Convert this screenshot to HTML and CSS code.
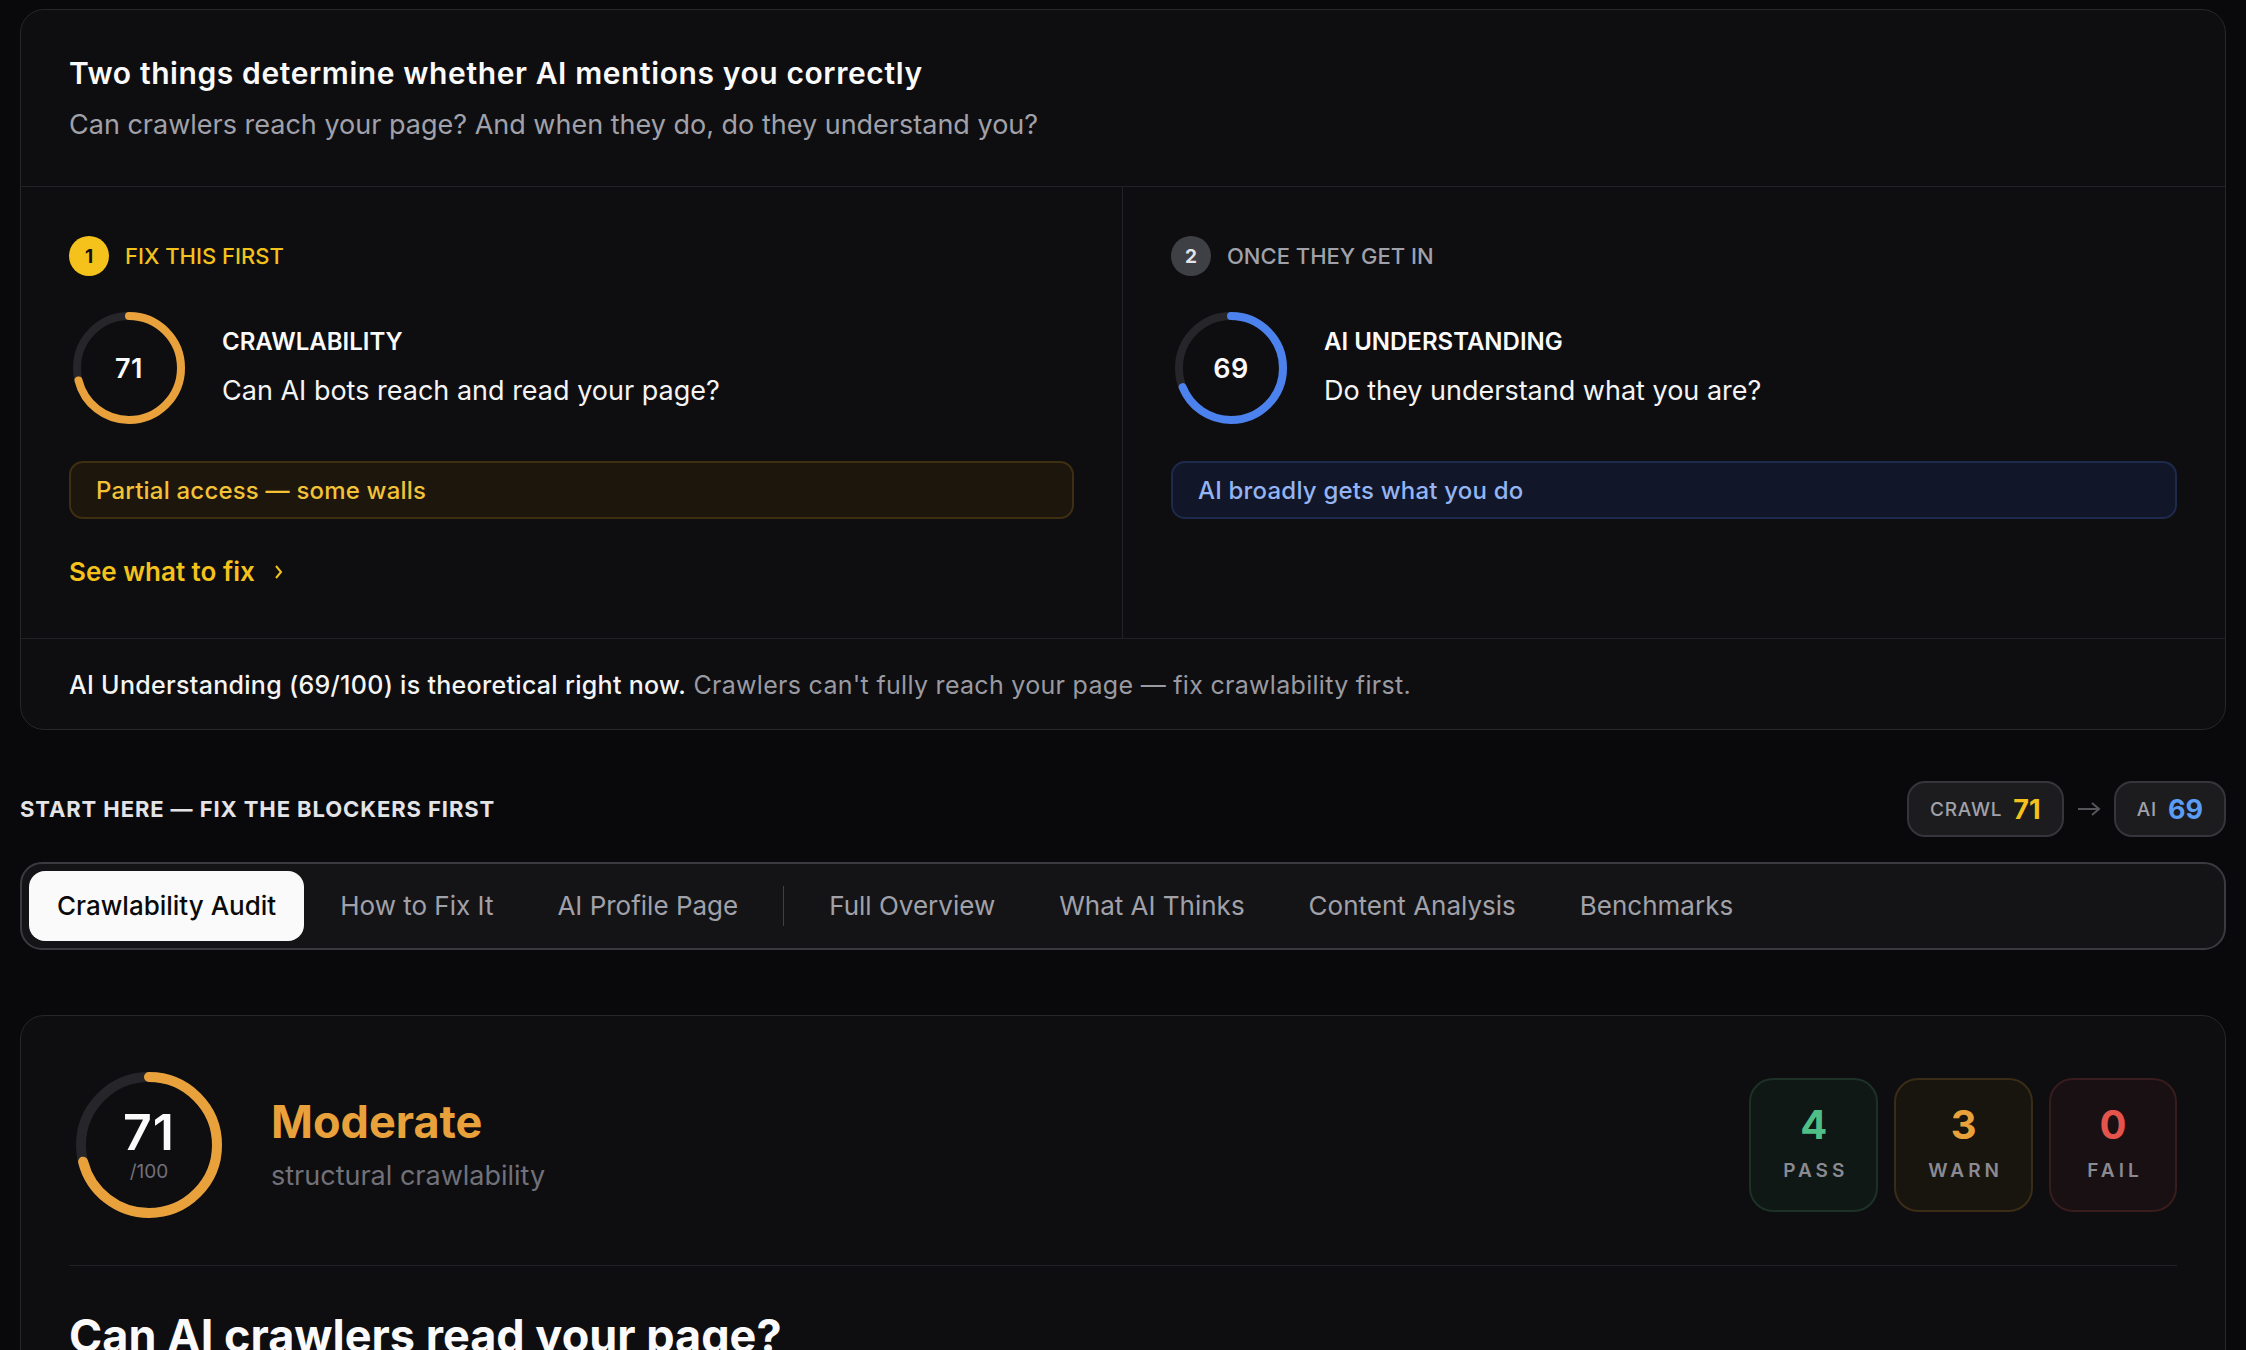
FILE: index.html
```html
<!DOCTYPE html>
<html lang="en">
<head>
    <meta charset="UTF-8">
    <meta name="viewport" content="width=device-width, initial-scale=1.0">
    <title>Crawlability Audit</title>
    <link rel="stylesheet" href="styles.css">
</head>
<body>

<main class="page">
    <section class="card overview">
        <header class="overview-head">
            <h1>Two things determine whether AI mentions you correctly</h1>
            <p>Can crawlers reach your page? And when they do, do they understand you?</p>
        </header>

        <div class="overview-grid">
            <div class="pillar pillar-first">
                <div class="step step-primary">
                    <span class="step-num">1</span>
                    <span class="step-label">FIX THIS FIRST</span>
                </div>
                <div class="score-row">
                    <div class="ring">
                        <svg width="120" height="120" viewBox="0 0 120 120">
                            <circle class="ring-track" cx="60" cy="60" r="52"/>
                            <circle class="ring-fill ring-orange" cx="60" cy="60" r="52" stroke-dasharray="232 327" transform="rotate(-90 60 60)"/>
                        </svg>
                        <span class="ring-value">71</span>
                    </div>
                    <div class="score-text">
                        <h3>CRAWLABILITY</h3>
                        <p>Can AI bots reach and read your page?</p>
                    </div>
                </div>
                <div class="verdict verdict-warn">Partial access — some walls</div>
                <a href="#" class="fix-link">See what to fix
                    <svg width="12" height="20" viewBox="0 0 12 20"><polyline points="3,4 8,10 3,16"/></svg>
                </a>
            </div>

            <div class="pillar">
                <div class="step">
                    <span class="step-num">2</span>
                    <span class="step-label">ONCE THEY GET IN</span>
                </div>
                <div class="score-row">
                    <div class="ring">
                        <svg width="120" height="120" viewBox="0 0 120 120">
                            <circle class="ring-track" cx="60" cy="60" r="52"/>
                            <circle class="ring-fill ring-blue" cx="60" cy="60" r="52" stroke-dasharray="225 327" transform="rotate(-90 60 60)"/>
                        </svg>
                        <span class="ring-value">69</span>
                    </div>
                    <div class="score-text">
                        <h3>AI UNDERSTANDING</h3>
                        <p>Do they understand what you are?</p>
                    </div>
                </div>
                <div class="verdict verdict-info">AI broadly gets what you do</div>
            </div>
        </div>

        <footer class="overview-foot">
            <strong>AI Understanding (69/100) is theoretical right now.</strong>
            <span>Crawlers can't fully reach your page — fix crawlability first.</span>
        </footer>
    </section>

    <div class="section-bar">
        <h2>START HERE — FIX THE BLOCKERS FIRST</h2>
        <div class="chips">
            <span class="chip">CRAWL <b class="chip-yellow">71</b></span>
            <svg class="chip-arrow" width="26" height="16" viewBox="0 0 26 16"><line x1="2" y1="8" x2="23" y2="8"/><polyline points="16,2 23,8 16,14"/></svg>
            <span class="chip">AI <b class="chip-blue">69</b></span>
        </div>
    </div>

    <nav class="tabs">
        <a href="#" class="tab active">Crawlability Audit</a>
        <a href="#" class="tab">How to Fix It</a>
        <a href="#" class="tab">AI Profile Page</a>
        <span class="tab-sep"></span>
        <a href="#" class="tab">Full Overview</a>
        <a href="#" class="tab">What AI Thinks</a>
        <a href="#" class="tab">Content Analysis</a>
        <a href="#" class="tab">Benchmarks</a>
    </nav>

    <section class="card audit">
        <div class="audit-head">
            <div class="ring ring-big">
                <svg width="160" height="160" viewBox="0 0 160 160">
                    <circle class="ring-track" cx="80" cy="80" r="68"/>
                    <circle class="ring-fill ring-orange" cx="80" cy="80" r="68" stroke-dasharray="303 428" transform="rotate(-90 80 80)"/>
                </svg>
                <div class="ring-big-value">
                    <span class="big-num">71</span>
                    <span class="big-max">/100</span>
                </div>
            </div>
            <div class="grade">
                <div class="grade-title">Moderate</div>
                <div class="grade-sub">structural crawlability</div>
            </div>
            <div class="stats">
                <div class="stat stat-pass"><span class="stat-num">4</span><span class="stat-label">PASS</span></div>
                <div class="stat stat-warn"><span class="stat-num">3</span><span class="stat-label">WARN</span></div>
                <div class="stat stat-fail"><span class="stat-num">0</span><span class="stat-label">FAIL</span></div>
            </div>
        </div>
        <div class="audit-body">
            <h2>Can AI crawlers read your page?</h2>
        </div>
    </section>
</main>

</body>
</html>
```

FILE: styles.css
```css
body {
    font-family: Inter, "Noto Sans", sans-serif;
    background-color: #09090b;
    color: #fafafa;
    margin: 0;
    padding: 0;
}
.page {
    padding: 9px 20px 0;
}
.card {
    background-color: #0e0e10;
    border: 1px solid #27272a;
    border-radius: 24px;
}

/* overview card */
.overview-head {
    padding: 43px 48px 43px;
    border-bottom: 1px solid #222226;
}
.overview-head h1 {
    margin: 0;
    font-size: 30px;
    line-height: 40px;
    font-weight: 600;
    letter-spacing: 0.6px;
    color: #fafafa;
}
.overview-head p {
    margin: 14px 0 0;
    font-size: 27px;
    line-height: 36px;
    color: #a1a1aa;
}
.overview-grid {
    display: grid;
    grid-template-columns: 1fr 1fr;
}
.pillar {
    padding: 49px 48px 49px;
    display: flex;
    flex-direction: column;
}
.pillar-first {
    border-right: 1px solid #222226;
}
.step {
    display: flex;
    align-items: center;
    gap: 16px;
    height: 40px;
}
.step-num {
    width: 40px;
    height: 40px;
    border-radius: 50%;
    background-color: #3f3f46;
    color: #e4e4e7;
    font-size: 19px;
    font-weight: 700;
    display: flex;
    align-items: center;
    justify-content: center;
}
.step-label {
    font-size: 22px;
    font-weight: 500;
    color: #a1a1aa;
}
.step-primary .step-num {
    background-color: #f4c21b;
    color: #111111;
}
.step-primary .step-label {
    color: #f4c21b;
}
.score-row {
    display: flex;
    align-items: center;
    gap: 33px;
    margin-top: 32px;
}
.ring {
    display: grid;
    place-items: center;
}
.ring svg,
.ring > span,
.ring > div {
    grid-area: 1 / 1;
}
.ring-track {
    fill: none;
    stroke: #26262a;
    stroke-width: 8;
}
.ring-fill {
    fill: none;
    stroke-width: 8;
    stroke-linecap: round;
}
.ring-orange {
    stroke: #e9a23b;
}
.ring-blue {
    stroke: #4c82ee;
}
.ring-value {
    font-size: 27px;
    font-weight: 600;
    letter-spacing: 0.5px;
    color: #fafafa;
}
.score-text h3 {
    margin: 0;
    font-size: 24px;
    line-height: 30px;
    font-weight: 600;
    color: #fafafa;
}
.score-text p {
    margin: 16px 0 0;
    font-size: 27px;
    line-height: 36px;
    color: #f4f4f5;
}
.verdict {
    margin-top: 33px;
    height: 58px;
    box-sizing: border-box;
    border-radius: 14px;
    padding: 0 25px;
    display: flex;
    align-items: center;
    font-size: 24px;
    font-weight: 500;
    letter-spacing: 0.2px;
}
.verdict-warn {
    background-color: #1d160d;
    border: 2px solid #3f2f12;
    color: #f3c236;
}
.verdict-info {
    background-color: #111728;
    border: 2px solid #1d2a4c;
    color: #94b4f4;
}
.fix-link {
    margin-top: 36px;
    display: flex;
    align-items: center;
    gap: 18px;
    font-size: 26px;
    line-height: 34px;
    font-weight: 600;
    color: #f4c21b;
    text-decoration: none;
}
.fix-link svg {
    fill: none;
    stroke: #f4c21b;
    stroke-width: 2;
}
.overview-foot {
    border-top: 1px solid #222226;
    padding: 29px 48px 27px;
    font-size: 25px;
    line-height: 34px;
    letter-spacing: 0.3px;
}
.overview-foot strong {
    font-weight: 500;
    color: #f4f4f5;
}
.overview-foot span {
    color: #9a9aa2;
}

/* section bar */
.section-bar {
    margin-top: 51px;
    display: flex;
    align-items: center;
    justify-content: space-between;
}
.section-bar h2 {
    margin: 0;
    font-size: 22px;
    font-weight: 700;
    letter-spacing: 0.9px;
    color: #e4e4e7;
}
.chips {
    display: flex;
    align-items: center;
    gap: 12px;
}
.chip {
    height: 56px;
    box-sizing: border-box;
    padding: 0 21px;
    border: 2px solid #35353b;
    border-radius: 18px;
    background-color: #1c1c1f;
    display: flex;
    align-items: center;
    gap: 11px;
    font-size: 19px;
    font-weight: 500;
    letter-spacing: 0.8px;
    color: #a1a1aa;
}
.chip b {
    font-size: 27px;
    font-weight: 700;
    letter-spacing: 0;
}
.chip-yellow {
    color: #f4c21b;
}
.chip-blue {
    color: #5b9cf5;
}
.chip-arrow {
    fill: none;
    stroke: #55555c;
    stroke-width: 2;
}

/* tabs */
.tabs {
    margin-top: 25px;
    display: flex;
    align-items: center;
    gap: 8px;
    padding: 7px;
    border: 2px solid #3a3a40;
    border-radius: 22px;
    background-color: #141416;
}
.tab {
    padding: 18px 28px;
    line-height: 34px;
    border-radius: 16px;
    font-size: 26px;
    color: #a1a1aa;
    text-decoration: none;
}
.tab.active {
    background-color: #fafafa;
    color: #0a0a0a;
    font-weight: 500;
}
.tab-sep {
    width: 1px;
    height: 40px;
    margin: 0 9px;
    background-color: #3f3f46;
}

/* audit card */
.audit {
    margin-top: 65px;
    padding: 49px 48px 0;
}
.audit-head {
    display: flex;
    align-items: center;
    padding-bottom: 40px;
    border-bottom: 1px solid #222226;
}
.ring-big .ring-track,
.ring-big .ring-fill {
    stroke-width: 10;
}
.ring-big-value {
    display: flex;
    flex-direction: column;
    align-items: center;
}
.big-num {
    font-size: 50px;
    line-height: 52px;
    font-weight: 600;
    letter-spacing: 1px;
}
.big-max {
    margin-top: 2px;
    font-size: 19px;
    line-height: 24px;
    color: #71717a;
}
.grade {
    margin-left: 42px;
    flex: 1;
}
.grade-title {
    font-size: 45px;
    line-height: 52px;
    font-weight: 700;
    color: #e9a23b;
}
.grade-sub {
    margin-top: 10px;
    font-size: 27px;
    line-height: 36px;
    color: #71717a;
}
.stats {
    display: flex;
    gap: 16px;
}
.stat {
    min-width: 128px;
    box-sizing: border-box;
    padding: 21px 32px 27px;
    border-radius: 24px;
    display: flex;
    flex-direction: column;
    align-items: center;
}
.stat-num {
    font-size: 40px;
    line-height: 48px;
    font-weight: 700;
}
.stat-label {
    margin-top: 10px;
    font-size: 19px;
    line-height: 24px;
    font-weight: 600;
    letter-spacing: 4px;
    margin-right: -4px;
    color: #8a8a92;
}
.stat-pass {
    background-color: #101816;
    border: 2px solid #1c3226;
}
.stat-pass .stat-num {
    color: #4fbf86;
}
.stat-warn {
    background-color: #18150f;
    border: 2px solid #3a2c16;
}
.stat-warn .stat-num {
    color: #e9a23b;
}
.stat-fail {
    background-color: #181012;
    border: 2px solid #381c1e;
}
.stat-fail .stat-num {
    color: #e5544c;
}
.audit-body {
    padding: 44px 0 80px;
}
.audit-body h2 {
    margin: 0;
    font-size: 45px;
    line-height: 52px;
    font-weight: 700;
    color: #fafafa;
}
```
